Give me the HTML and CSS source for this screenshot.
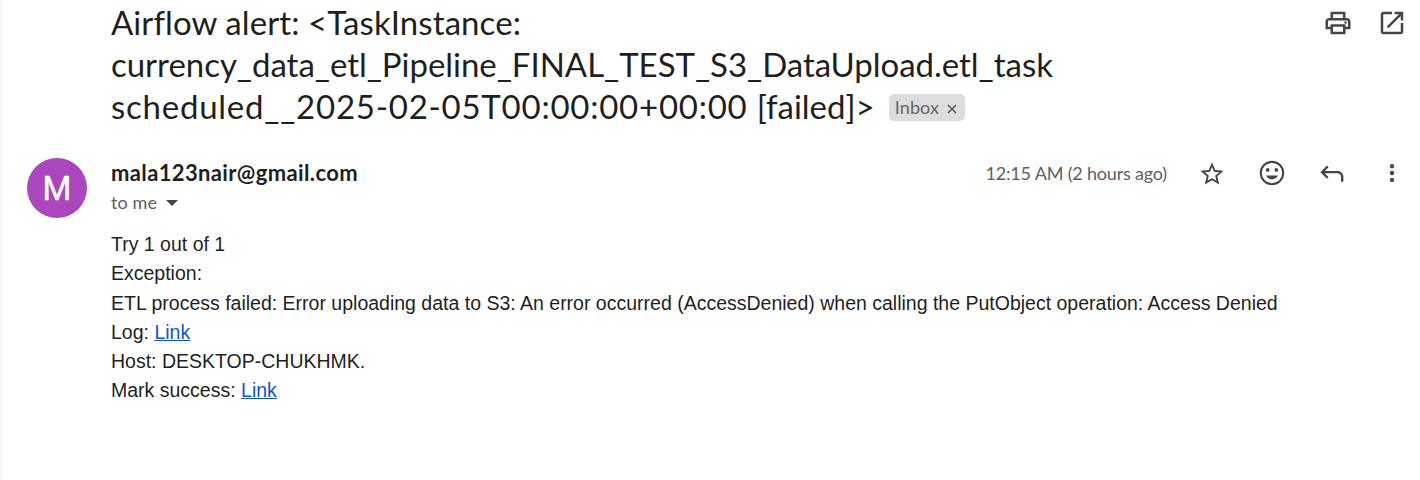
FILE: index.html
```html
<!DOCTYPE html>
<html lang="en">
<head>
<meta charset="utf-8">
<title>Airflow alert</title>
<link rel="stylesheet" href="styles.css">
</head>
<body>
<main class="mail">
  <header class="subject">
    <h1 class="title">
      <span class="line"><span class="l1">Airflow alert: &lt;TaskInstance:</span></span>
      <span class="line"><span class="l2">currency_data_etl_Pipeline_FINAL_TEST_S3_DataUpload.etl_task</span></span>
      <span class="line"><span class="l3">scheduled__2025-02-05T00:00:00+00:00 <span class="state">[failed]&gt;</span></span><span class="label"><span class="inbox">Inbox</span><svg class="close" viewBox="0 0 10 10"><path d="M1 1l8 8M9 1l-8 8"/></svg></span></span>
    </h1>
    <div class="tools">
      <svg class="icon" viewBox="0 0 24 24"><path d="M19 8h-1V3H6v5H5c-1.660 0-3 1.340-3 3v6h4v4h12v-4h4v-6c0-1.660-1.340-3-3-3zM8 5h8v3H8V5zm8 12v2H8v-4h8v2zm2-2v-2H6v2H4v-4c0-.55.45-1 1-1h14c.55 0 1 .45 1 1v4h-2z"/><circle cx="18" cy="11.500" r="1"/></svg>
      <svg class="icon" viewBox="0 0 24 24"><path d="M19 19H5V5h7V3H5c-1.110 0-2 .9-2 2v14c0 1.100.89 2 2 2h14c1.100 0 2-.9 2-2v-7h-2v7zM14 3v2h3.590l-9.830 9.830 1.410 1.410L19 6.410V10h2V3h-7z"/></svg>
    </div>
  </header>
  <section class="meta">
    <div class="avatar">M</div>
    <div class="sender">
      <div class="from">mala123nair@gmail.com</div>
      <div class="to"><span class="tome">to me</span><span class="caret"></span></div>
    </div>
    <div class="actions">
      <span class="time">12:15 AM (2 hours ago)</span>
      <svg class="icon star" viewBox="0 0 24 24"><path d="M22 9.240l-7.190-.62L12 2 9.190 8.630 2 9.240l5.460 4.730L5.820 21 12 17.270 18.180 21l-1.630-7.030L22 9.240zM12 15.400l-3.760 2.270 1-4.280-3.320-2.880 4.380-.38L12 6.100l1.710 4.040 4.380.38-3.320 2.880 1 4.280L12 15.400z"/></svg>
      <svg class="icon" viewBox="0 0 24 24"><path d="M12 2.200a9.800 9.800 0 1 0 0 19.600 9.800 9.800 0 0 0 0-19.600zm0 17.900a8.100 8.100 0 1 1 0-16.200 8.100 8.100 0 0 1 0 16.200zM7.200 14c.8 1.900 2.600 3.100 4.800 3.100s4-1.200 4.800-3.100z"/><circle cx="8.500" cy="9.500" r="1.500"/><circle cx="15.500" cy="9.500" r="1.500"/></svg>
      <svg class="icon" viewBox="0 0 24 24"><path d="M8 6l1.300 1.300L6.200 10.400H16.500c2.600 0 4.600 2 4.600 4.600v3.900h-1.900v-3.900c0-1.600-1.200-2.800-2.800-2.800H6.200l3.100 3.100L8 16.600l-5.300-5.300z"/></svg>
      <svg class="icon" viewBox="0 0 24 24"><circle cx="12" cy="6.500" r="1.750"/><circle cx="12" cy="12" r="1.750"/><circle cx="12" cy="17.500" r="1.750"/></svg>
    </div>
  </section>
  <article class="body">
    <div>Try 1 out of 1</div>
    <div>Exception:</div>
    <div>ETL process failed: Error uploading data to S3: An error occurred (AccessDenied) when calling the PutObject operation: Access Denied</div>
    <div>Log: <a href="#">Link</a></div>
    <div>Host: DESKTOP-CHUKHMK.</div>
    <div>Mark success: <a href="#">Link</a></div>
  </article>
</main>
</body>
</html>
```
FILE: styles.css
```css
* { box-sizing: border-box; }
body { margin: 0; background: #fff; color: #1f1f1f; font-family: Lato, "Open Sans", sans-serif; }
.mail { height: 480px; overflow: hidden; border-left: 3px solid #f6f8fc; padding: 1px 13px 0 24px; }
.subject { display: flex; justify-content: space-between; padding-left: 84px; }
.title { margin: 0; font-size: 33px; font-weight: 400; }
.line { display: flex; align-items: center; height: 42px; line-height: 40px; white-space: nowrap; }
.l1 { letter-spacing: 0.08px; }
.l2 { letter-spacing: -0.03px; }
.l3 { letter-spacing: 0.76px; }
.state { letter-spacing: 0; }
.label { display: flex; align-items: center; gap: 8px; margin: 2px 0 0 14px; width: 76px; height: 27px; padding: 0 6px; border-radius: 5px; background: #ddd; color: #666; font-size: 18px; line-height: 26px; letter-spacing: 0.1px; }
.inbox { margin-top: -1px; }
.close { width: 10px; height: 10px; margin-top: 3px; fill: none; stroke: #555; stroke-width: 1.500; }
.icon { width: 30px; height: 30px; fill: #444746; flex: none; }
.star { width: 28px; height: 28px; margin: 2px 1px 0; }
.tools { display: flex; gap: 24px; padding-top: 7px; height: 37px; }
.meta { display: flex; height: 91px; padding-top: 31px; }
.avatar { width: 60px; height: 60px; border-radius: 50%; background: #ab47bc; color: #fff; font: 400 33px/62px Roboto, sans-serif; -webkit-text-stroke: 0.4px #fff; text-align: center; margin-right: 24px; }
.sender { flex: 1; }
.from { font-size: 22px; font-weight: 700; line-height: 29px; letter-spacing: 0.36px; }
.to { display: flex; align-items: center; gap: 9px; color: #5e5e5e; font-size: 18px; line-height: 30px; letter-spacing: 0.1px; }
.caret { margin-top: 2px; border: 6px solid transparent; border-top-color: #444746; border-bottom: 0; }
.actions { display: flex; align-items: center; gap: 30px; height: 30px; }
.time { color: #5e5e5e; font-size: 18px; line-height: 30px; letter-spacing: -0.18px; }
.body { padding: 12.100px 0 0 84px; font: 19.500px/29.250px "Liberation Sans", Arial, sans-serif; white-space: nowrap; }
.body a { color: #1155cc; }
```
